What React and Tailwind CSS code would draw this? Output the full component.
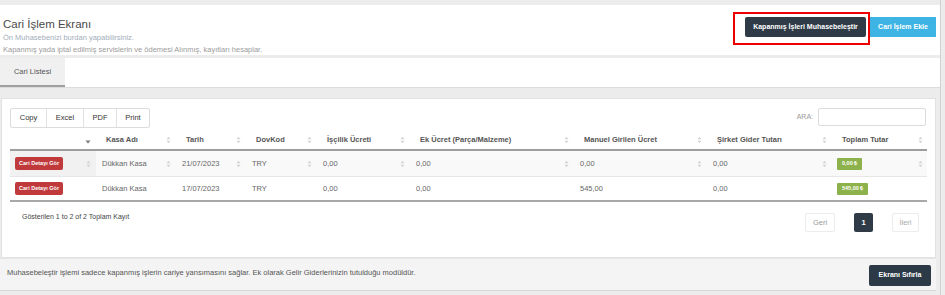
import React from "react";

const cols = [
  { label: "", w: "86px" },
  { label: "Kasa Adı", w: "80px" },
  { label: "Tarih", w: "70px" },
  { label: "DovKod", w: "71px" },
  { label: "İşçilik Ücreti", w: "93px" },
  { label: "Ek Ücret (Parça/Malzeme)", w: "164px" },
  { label: "Manuel Girilen Ücret", w: "133px" },
  { label: "Şirket Gider Tutarı", w: "125px" },
  { label: "Toplam Tutar", w: "96px" },
];

const rows = [
  { kasa: "Dükkan Kasa", tarih: "21/07/2023", dov: "TRY", iscilik: "0,00", ek: "0,00", manuel: "0,00", sirket: "0,00", toplam: "0,00 ₺" },
  { kasa: "Dükkan Kasa", tarih: "17/07/2023", dov: "TRY", iscilik: "0,00", ek: "0,00", manuel: "545,00", sirket: "0,00", toplam: "545,00 ₺" },
];

function SortIcon({ desc }) {
  if (desc) {
    return (
      <svg width="6" height="6" viewBox="0 0 6 6" className="absolute right-[5px] top-1/2 -translate-y-1/2 mt-[2px]">
        <path d="M0.5 1.5 L5.5 1.5 L3 4.5 Z" fill="#777" />
      </svg>
    );
  }
  return (
    <svg width="5" height="8" viewBox="0 0 5 8" className="absolute right-[5px] top-1/2 -translate-y-1/2">
      <path d="M0.5 3.2 L4.5 3.2 L2.5 0.8 Z" fill="#d4d4d4" />
      <path d="M0.5 4.8 L4.5 4.8 L2.5 7.2 Z" fill="#d4d4d4" />
    </svg>
  );
}

const grid = "grid grid-cols-[86px_80px_70px_71px_93px_164px_133px_125px_96px]";

export default function App() {
  return (
    <div
      className="w-[945px] h-[295px] bg-[#ececec] overflow-hidden"
      style={{ fontFamily: '"Liberation Sans", Arial, sans-serif' }}
    >
      <div className="w-[941px] h-full border-r border-[#d2d2d2] pt-[5px] flex flex-col">
        {/* header */}
        <div className="relative h-[50px] bg-white flex justify-between pl-[3px] pr-[4px]">
          <div className="pt-[12px]">
            <h1 className="text-[11.5px] leading-[14px] text-[#4a4a4a]">Cari İşlem Ekranı</h1>
            <p className="text-[7.5px] leading-[12px] text-[#a3aebb] mt-[1px]">Ön Muhasebenizi burdan yapabilirsiniz.</p>
            <p className="text-[7.5px] leading-[12px] text-[#9c9c9c]">
              Kapanmış yada iptal edilmiş servislerin ve ödemesi Alınmış, kayıtları hesaplar.
            </p>
          </div>
          <div className="flex items-start pt-[12px] gap-[4px]">
            <button className="h-[20px] w-[121px] bg-[#2f3b47] text-white text-[7px] font-bold rounded-[2px]">
              Kapanmış İşleri Muhasebeleştir
            </button>
            <button className="h-[20px] w-[66px] bg-[#3db4e4] text-white text-[7px] font-bold">
              Cari İşlem Ekle
            </button>
          </div>
          <div className="absolute left-[733px] top-[7px] w-[137px] h-[33px] border-[2.5px] border-[#ee0000]" />
        </div>

        {/* tabs */}
        <div className="mt-[3px] h-[30px] bg-white border-b border-[#dcdcdc] flex">
          <div className="w-[65px] bg-[#f0f0f0] border-b-2 border-[#a0a0a0] flex items-center justify-center text-[7.5px] text-[#555]">
            Cari Listesi
          </div>
        </div>

        {/* card */}
        <div className="mt-[10px] ml-[1px] mr-[4px] h-[160px] bg-white border border-[#e2e2e2] px-[8px] pt-[9px] flex flex-col">
          <div className="flex justify-between items-start h-[20px]">
            <div className="flex border border-[#dcdcdc] rounded-[2px] h-[20px]">
              {["Copy", "Excel", "PDF", "Print"].map((b, i) => (
                <div
                  key={b}
                  className={`flex items-center justify-center text-[7.5px] text-[#333] ${i > 0 ? "border-l border-[#e2e2e2]" : ""} ${
                    ["w-[35px]", "w-[37px]", "w-[33px]", "w-[33px]"][i]
                  }`}
                >
                  {b}
                </div>
              ))}
            </div>
            <div className="flex items-center gap-[5px] pr-[1px]">
              <span className="text-[7px] text-[#999]">ARA:</span>
              <div className="w-[108px] h-[18px] border border-[#dcdcdc] rounded-[2px]" />
            </div>
          </div>

          <div className="mt-[2px]">
            <div className={`${grid} h-[21px] border-b-2 border-[#9e9e9e]`}>
              {cols.map((c, i) => (
                <div key={i} className="relative flex items-center pl-[10px] text-[7.5px] font-bold text-[#555]">
                  {c.label}
                  <SortIcon desc={i === 0} />
                </div>
              ))}
            </div>
            {rows.map((r, ri) => {
              const cells = [r.kasa, r.tarih, r.dov, r.iscilik, r.ek, r.manuel, r.sirket];
              return (
                <div
                  key={ri}
                  className={`${grid} ${ri === 0 ? "h-[25px] bg-[#f9f9f9]" : "h-[24px] bg-white border-t border-[#e6e6e6]"}`}
                >
                  <div className={`relative flex items-center pl-[5px] ${ri === 0 ? "bg-[#f1f1f1]" : ""}`}>
                    <span className="bg-[#c0393b] text-white text-[5.5px] font-bold px-[4px] h-[13px] flex items-center rounded-[2px]">
                      Cari Detayı Gör
                    </span>
                    {ri === 0 && <SortIcon />}
                  </div>
                  {cells.map((c, ci) => (
                    <div key={ci} className="relative flex items-center pl-[6px] text-[7.5px] text-[#666]">
                      {c}
                      {ri === 0 && <SortIcon />}
                    </div>
                  ))}
                  <div className="relative flex items-center pl-[5px]">
                    <span className="bg-[#8db24b] text-white text-[5.5px] font-bold px-[5px] h-[12px] flex items-center rounded-[1px]">
                      {r.toplam}
                    </span>
                    {ri === 0 && <SortIcon />}
                  </div>
                </div>
              );
            })}
            <div className="border-b-2 border-[#a8a8a8]" />
          </div>

          <div className="flex justify-between items-start mt-[10px]">
            <span className="pl-[12px] text-[7px] leading-[10px] text-[#444]">Gösterilen 1 to 2 of 2 Toplam Kayıt</span>
            <div className="flex items-center mr-[8px] mt-[1px]">
              <div className="w-[30px] h-[19px] border border-[#ececec] rounded-[2px] flex items-center justify-center text-[7.5px] text-[#999]">
                Geri
              </div>
              <div className="ml-[19px] w-[19px] h-[19px] bg-[#2f3b47] rounded-[2px] flex items-center justify-center text-[7.5px] font-bold text-white">
                1
              </div>
              <div className="ml-[19px] w-[27px] h-[19px] border border-[#ececec] rounded-[2px] flex items-center justify-center text-[7.5px] text-[#aaa]">
                İleri
              </div>
            </div>
          </div>
        </div>

        {/* footer */}
        <div className="h-[33px] mr-[4px] bg-[#f4f4f4] border-t border-[#e6e6e6] border-b border-b-[#d6d6d6] flex items-center justify-between pl-[7px] pr-[5px]">
          <span className="text-[7.5px] text-[#555] -mt-[4px]">
            Muhasebeleştir işlemi sadece kapanmış işlerin cariye yansımasını sağlar. Ek olarak Gelir Giderlerinizin tutulduğu modüldür.
          </span>
          <button className="h-[21px] w-[62px] bg-[#2c3a48] text-white text-[7px] font-bold rounded-[2px] mt-[2px]">
            Ekranı Sıfırla
          </button>
        </div>
      </div>
    </div>
  );
}
